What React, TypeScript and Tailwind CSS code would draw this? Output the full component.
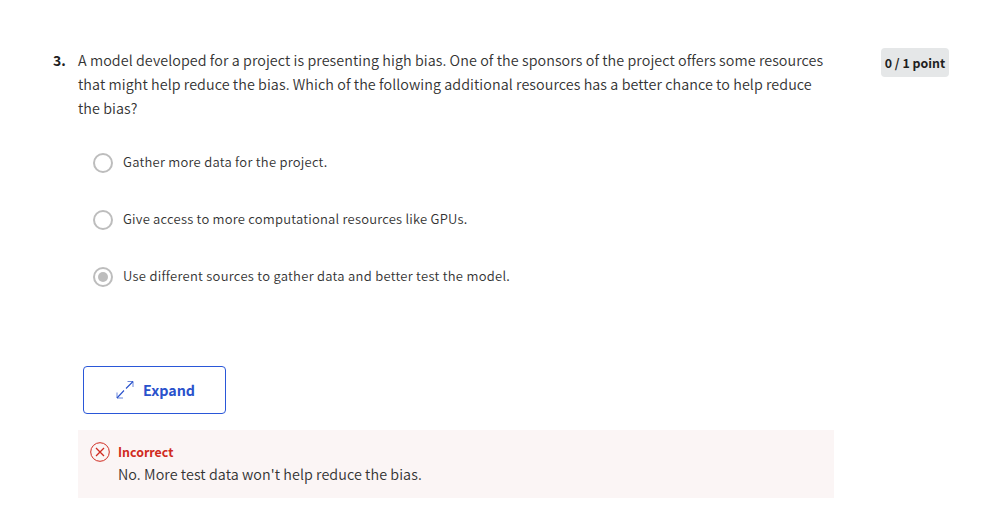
const cjk = "font-['Noto_Sans_CJK_SC',sans-serif]";

function Radio({ checked }: { checked?: boolean }) {
  return (
    <span className="mt-px flex size-5 shrink-0 items-center justify-center rounded-full border-2 border-[#bdbdbd]">
      {checked && <span className="size-2.5 rounded-full bg-[#bdbdbd]" />}
    </span>
  );
}

function Option({ label, tracking, checked }: { label: string; tracking: string; checked?: boolean }) {
  return (
    <label className="flex h-[57px] items-start gap-2.5">
      <Radio checked={checked} />
      <span className={`whitespace-nowrap text-[13px] font-[350] leading-5 text-[#333] ${tracking}`}>{label}</span>
    </label>
  );
}

export default function App() {
  return (
    <main className={`h-[521px] w-[989px] overflow-hidden bg-white pl-[52px] pt-12 text-[#333] ${cjk}`}>
      <div className="flex items-start">
        <span className="w-[26px] shrink-0 pl-px text-[14px] font-bold leading-6 text-[#1f1f1f]">3.</span>
        <p className="w-[803px] whitespace-nowrap text-[14.32px] font-[350] leading-6 tracking-[0.07px]">
          A model developed for a project is presenting high bias. One of the sponsors of the project offers some resources
          <br />
          that might help reduce the bias. Which of the following additional resources has a better chance to help reduce
          <br />
          the bias?
        </p>
        <div className="flex h-[29px] w-[68px] shrink-0 items-center justify-center whitespace-nowrap rounded-[4px] bg-[#e5e7e8] pt-0.5 text-[12.4px] font-bold text-[#1f1f1f]">
          0 / 1 point
        </div>
      </div>
      <div className="ml-[41px] mt-8">
        <Option label="Gather more data for the project." tracking="tracking-[0.25px]" />
        <Option label="Give access to more computational resources like GPUs." tracking="tracking-[0.22px]" />
        <Option label="Use different sources to gather data and better test the model." tracking="tracking-[0.27px]" checked />
      </div>
      <button className="ml-[31px] mt-[43px] flex h-12 w-[143px] items-center rounded-[4px] border border-[#2a57d8] pl-[31px] text-[14.3px] font-bold text-[#2a52cc]">
        <svg className="mr-2 size-5" viewBox="0 0 20 20" fill="none" stroke="currentColor">
          <path d="M12.5 1.5h5.5V7M8 18H2V12.5" strokeOpacity=".7" />
          <path d="M18 1.5l-7 7M2 18l7-7.5" strokeWidth="1.1" />
        </svg>
        Expand
      </button>
      <section className="ml-[26px] mt-4 flex h-[68px] w-[756px] bg-[#fbf5f5] pl-3 pt-3">
        <svg className="mr-2 size-5 shrink-0" viewBox="0 0 20 20" fill="none" stroke="#d02b21">
          <circle cx="10" cy="10" r="9.3" />
          <path d="M6 6l8 8M14 6l-8 8" strokeWidth="1.3" />
        </svg>
        <div>
          <h2 className="text-[12.4px] font-bold leading-5 text-[#d02b21]">Incorrect</h2>
          <p className="text-[14.32px] font-[350] leading-6 tracking-[0.07px]">No. More test data won't help reduce the bias.</p>
        </div>
      </section>
    </main>
  );
}
